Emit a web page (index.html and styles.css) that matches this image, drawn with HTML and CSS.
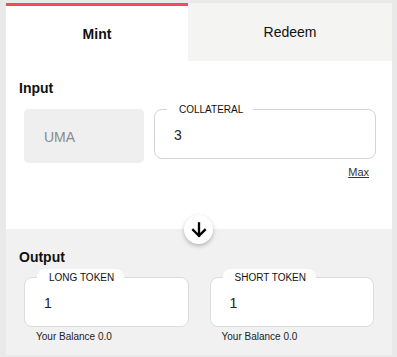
FILE: index.html
```html
<!DOCTYPE html>
<html lang="en">
<head>
  <meta charset="UTF-8">
  <meta name="viewport" content="width=device-width, initial-scale=1.0">
  <title>Mint</title>
  <link rel="stylesheet" href="styles.css">
</head>
<body>
  <div class="card">
    <div class="tabs">
      <div class="tab active">Mint</div>
      <div class="tab">Redeem</div>
    </div>

    <div class="section input-section">
      <h3>Input</h3>
      <div class="input-row">
        <div class="token-select">UMA</div>
        <div class="field">
          <span class="legend">COLLATERAL</span>
          <span class="value">3</span>
        </div>
      </div>
      <div class="max"><a href="#">Max</a></div>
    </div>

    <div class="section output-section">
      <div class="arrow">
        <svg width="20" height="20" viewBox="0 0 24 24">
          <path d="M12 4v15M5 12l7 7 7-7" fill="none" stroke="#000" stroke-width="2.8" stroke-linecap="square"/>
        </svg>
      </div>
      <h3>Output</h3>
      <div class="output-row">
        <div class="col">
          <div class="field">
            <span class="legend">LONG TOKEN</span>
            <span class="value">1</span>
          </div>
          <p class="balance">Your Balance 0.0</p>
        </div>
        <div class="col">
          <div class="field">
            <span class="legend">SHORT TOKEN</span>
            <span class="value">1</span>
          </div>
          <p class="balance">Your Balance 0.0</p>
        </div>
      </div>
    </div>
  </div>
</body>
</html>
```
FILE: styles.css
```css
body { margin: 0; padding: 3px 5px 0 6px; background: #e9e9e9; font-family: "Liberation Sans", Arial, sans-serif; color: #111; }
.card { width: 386px; background: #fff; }

.tabs { display: flex; height: 58px; }
.tab { display: flex; align-items: center; justify-content: center; font-size: 14px; background: #f4f4f3; flex: 1; }
.tab.active { flex: 0 0 182px; background: #fff; border-top: 3px solid #f94b55; font-weight: bold; }

.section { position: relative; box-sizing: border-box; }
.section h3 { margin: 0; padding-left: 13px; font-size: 14px; line-height: 18px; }

.input-section { height: 168px; padding-top: 18px; background: #fff; }
.input-row { display: flex; gap: 10px; margin-top: 12px; padding: 0 16px 0 18px; align-items: flex-start; }
.token-select { flex: 0 0 120px; height: 54px; box-sizing: border-box; padding-left: 20px; line-height: 56px; background: #efefef; border-radius: 5px; color: #8a8a8a; font-size: 14px; }
.input-row .field { flex: 1; }

.field { position: relative; height: 50px; box-sizing: border-box; border: 1px solid #d3d3d3; border-radius: 8px; background: #fff; }
.legend { position: absolute; top: -9px; left: 12px; height: 18px; line-height: 18px; padding: 0 10px 0 12px; background: #fff; border-radius: 8px 8px 0 0; font-size: 10px; color: #111; }
.value { display: block; padding-left: 19px; line-height: 50px; font-size: 14px; color: #222; }

.max { margin-top: 3px; padding-right: 23px; text-align: right; font-size: 11px; line-height: 13px; }
.max a { color: #333; }

.output-section { height: 126px; padding-top: 19px; background: #f1f1f1; }
.arrow { position: absolute; top: -14px; left: 178px; width: 29px; height: 29px; border-radius: 50%; background: #fff; box-shadow: 0 2px 4px rgba(0, 0, 0, 0.25); display: flex; align-items: center; justify-content: center; }
.output-row { display: grid; grid-template-columns: 1fr 1fr; gap: 21px; margin-top: 11px; padding: 0 18px; }
.output-row .field { border-color: #dcdcdc; }
.balance { margin: 4px 0 0; padding-left: 12px; font-size: 10px; line-height: 12px; color: #222; }
```
